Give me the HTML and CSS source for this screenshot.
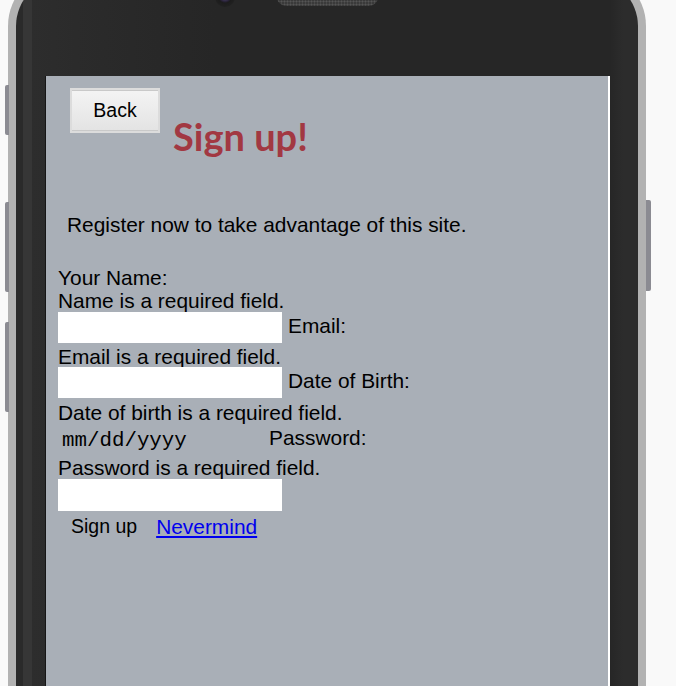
FILE: index.html
```html
<!DOCTYPE html>
<html lang="en">
<head>
<meta charset="utf-8">
<title>Sign up</title>
<link rel="stylesheet" href="styles.css">
</head>
<body>
<div class="phone">
  <span class="side-btn side-btn-1"></span>
  <span class="side-btn side-btn-2"></span>
  <span class="side-btn side-btn-3"></span>
  <span class="side-btn side-btn-right"></span>
  <div class="top-bar">
    <span class="camera"></span>
    <span class="speaker"></span>
  </div>
  <div class="screen">
    <div class="header">
      <button class="back" type="button">Back</button>
      <h1 class="title">Sign up!</h1>
    </div>
    <p class="intro">Register now to take advantage of this site.</p>
    <form class="form">
      <div class="line">Your Name:</div>
      <div class="line">Name is a required field.</div>
      <div class="field-row row-a"><input class="text-input" type="text"><span class="inline-label">Email:</span></div>
      <div class="line line-short">Email is a required field.</div>
      <div class="field-row row-b"><input class="text-input" type="text"><span class="inline-label">Date of Birth:</span></div>
      <div class="line">Date of birth is a required field.</div>
      <div class="field-row row-c"><input class="date-input" type="text" placeholder="mm/dd/yyyy"><span class="inline-label label-date">Password:</span></div>
      <div class="line">Password is a required field.</div>
      <div class="field-row row-d"><input class="text-input pass" type="password"></div>
      <div class="actions">
        <button class="signup" type="button">Sign up</button>
        <a class="cancel" href="#">Nevermind</a>
      </div>
    </form>
  </div>
</div>
</body>
</html>
```
FILE: styles.css
```css
html, body {
  margin: 0;
  padding: 0;
}

body {
  background: #f9f9f9;
  overflow: hidden;
  height: 686px;
  font-family: "Liberation Sans", Arial, sans-serif;
  font-size: 20.9px;
  color: #000;
}

.phone {
  position: relative;
  box-sizing: border-box;
  width: 638px;
  height: 716px;
  margin: -30px 0 0 8px;
  border: 8px solid #b2b2b2;
  border-bottom: 0;
  border-radius: 56px 56px 0 0;
  background: linear-gradient(90deg, #2a2a2a 0, #2a2a2a 7px, #363636 7px, #363636 16px, #2d2d2d 16px, #2b2b2b 60px, #262626 200px, #262626 594px, #2c2c2c 607px, #2c2c2c 100%);
}

.side-btn {
  position: absolute;
  width: 4px;
  background: #8b8b92;
  border-radius: 2px 0 0 2px;
  left: -11px;
}

.side-btn-1 { top: 107px; height: 50px; }
.side-btn-2 { top: 224px; height: 90px; }
.side-btn-3 { top: 344px; height: 90px; }

.side-btn-right {
  left: auto;
  right: -13px;
  width: 5px;
  top: 222px;
  height: 91px;
  border-radius: 0 2px 2px 0;
}

.top-bar {
  display: flex;
  align-items: flex-start;
  height: 98px;
  padding-left: 199px;
}

.camera {
  width: 20px;
  height: 20px;
  margin-top: 9px;
  border-radius: 50%;
  background: radial-gradient(circle at 50% 45%, #5b4f7a 0, #3b3352 4px, #241f30 6px, #1c1c1c 7px, #202020 10px);
}

.speaker {
  width: 101px;
  height: 18px;
  margin: 10px 0 0 42px;
  border-radius: 9px;
  background-color: #3a3a3a;
  background-image: radial-gradient(circle, #555 0.8px, transparent 1.2px);
  background-size: 3px 3px;
}

.screen {
  box-sizing: content-box;
  width: 562px;
  height: 610px;
  margin-left: 29px;
  border-left: 1px solid #161616;
  border-right: 2px solid #ffffff;
  background: #a9afb7;
}

.header {
  display: flex;
  align-items: flex-start;
  height: 114px;
}

.back {
  box-sizing: border-box;
  width: 90px;
  height: 45px;
  margin: 12px 0 0 24px;
  padding: 0;
  border: 2px solid #dcdcdc;
  background: linear-gradient(#f4f4f4, #e3e3e3);
  box-shadow: inset 0 1px 0 #c9c9c9, inset 0 -1px 0 #c9c9c9;
  font-family: "Liberation Sans", Arial, sans-serif;
  font-size: 19.5px;
  color: #000;
}

.title {
  margin: 40px 0 0 13px;
  font-family: Lato, "Open Sans", sans-serif;
  font-weight: 700;
  font-size: 38px;
  line-height: 40px;
  color: #a23842;
}

.intro {
  margin: 23px 0 0 21px;
  line-height: 23px;
}

.form {
  margin: 30px 0 0 0;
  padding-left: 12px;
}

.line {
  height: 23px;
  line-height: 23px;
  white-space: nowrap;
}

.line-short { height: 22px; }

.field-row {
  display: flex;
  align-items: flex-start;
}

.row-a { height: 33px; }
.row-b { height: 34px; }
.row-c { height: 32px; }
.row-d { height: 32px; }

.text-input {
  box-sizing: border-box;
  width: 224px;
  height: 31px;
  margin: 0;
  padding: 0 4px;
  border: 0;
  background: #fff;
  font-family: "Liberation Sans", Arial, sans-serif;
  font-size: 20.9px;
  outline: none;
}

.pass { height: 32px; }

.inline-label {
  margin-left: 6px;
  line-height: 28px;
  white-space: nowrap;
}

.date-input {
  box-sizing: border-box;
  width: 205px;
  height: 32px;
  margin: 0;
  padding: 0 0 0 4px;
  border: 0;
  background: transparent;
  font-family: "Liberation Mono", "Courier New", monospace;
  font-size: 20.8px;
  color: #000;
  outline: none;
}

.date-input::placeholder {
  color: #000;
  opacity: 1;
}

.label-date { line-height: 27px; }

.actions {
  display: flex;
  align-items: flex-start;
  height: 31px;
}

.signup {
  margin: 0;
  padding: 0 19px 0 13px;
  border: 0;
  background: transparent;
  font-family: "Liberation Sans", Arial, sans-serif;
  font-size: 19.5px;
  line-height: 31px;
  color: #000;
}

.cancel {
  line-height: 31px;
  color: #0000ee;
  text-decoration: underline;
}
```
